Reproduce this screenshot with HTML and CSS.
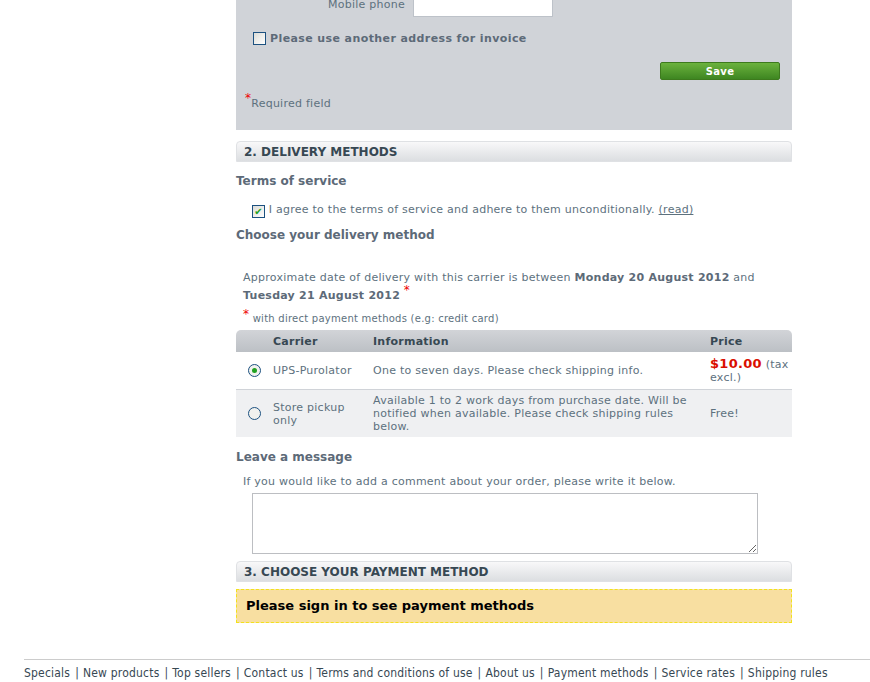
FILE: index.html
```html
<!DOCTYPE html>
<html lang="en">
<head>
  <meta charset="UTF-8">
  <title>Order</title>
  <link rel="stylesheet" href="styles.css">
</head>
<body>
  <div class="column">
    <div class="address-box">
      <div class="field-row">
        <label>Mobile phone</label>
        <input type="text" class="text-input">
      </div>
      <div class="invoice-row">
        <span class="box"></span>
        <span>Please use another address for invoice</span>
      </div>
      <div class="save-row">
        <button class="save-btn">Save</button>
      </div>
      <p class="required"><sup>*</sup>Required field</p>
    </div>

    <h2 class="step-title">2. Delivery methods</h2>
    <h3 class="sub-title">Terms of service</h3>
    <p class="terms">
      <span class="box checked">&#10004;</span>
      I agree to the terms of service and adhere to them unconditionally. <a href="#">(read)</a>
    </p>
    <h3 class="sub-title choose-title">Choose your delivery method</h3>

    <p class="delivery-date">Approximate date of delivery with this carrier is between <b>Monday 20 August 2012</b> and <b>Tuesday 21 August 2012</b> <sup>*</sup></p>
    <p class="note"><sup>*</sup> with direct payment methods (e.g: credit card)</p>

    <table class="carriers">
      <thead>
        <tr>
          <th class="c-radio"></th>
          <th class="c-name">Carrier</th>
          <th class="c-info">Information</th>
          <th class="c-price">Price</th>
        </tr>
      </thead>
      <tbody>
        <tr>
          <td class="c-radio"><span class="radio on"></span></td>
          <td class="name">UPS-Purolator</td>
          <td class="info">One to seven days. Please check shipping info.</td>
          <td><span class="price">$10.00</span> (tax excl.)</td>
        </tr>
        <tr class="alt">
          <td class="c-radio"><span class="radio"></span></td>
          <td class="name">Store pickup only</td>
          <td class="info">Available 1 to 2 work days from purchase date. Will be notified when available. Please check shipping rules below.</td>
          <td>Free!</td>
        </tr>
      </tbody>
    </table>

    <h3 class="sub-title msg-title">Leave a message</h3>
    <p class="msg-hint">If you would like to add a comment about your order, please write it below.</p>
    <textarea class="message"></textarea>

    <h2 class="step-title pay-title">3. Choose your payment method</h2>
    <p class="warning">Please sign in to see payment methods</p>
  </div>

  <div class="footer">
    <a href="#">Specials</a>|<a href="#">New products</a>|<a href="#">Top sellers</a>|<a href="#">Contact us</a>|<a href="#">Terms and conditions of use</a>|<a href="#">About us</a>|<a href="#">Payment methods</a>|<a href="#">Service rates</a>|<a href="#">Shipping rules</a>
  </div>
</body>
</html>
```

FILE: styles.css
```css
* {
  margin: 0;
  padding: 0;
  box-sizing: border-box;
}

body {
  background: #fff;
  color: #5d717e;
  font-family: "DejaVu Sans", Verdana, sans-serif;
  font-size: 11px;
  letter-spacing: 0.25px;
}

.column {
  width: 556px;
  margin-left: 236px;
}

/* address form */
.address-box {
  background: #d0d3d8;
  height: 130px;
  padding: 0 12px 0 9px;
}

.field-row {
  display: flex;
  align-items: flex-start;
  height: 17px;
}

.field-row label {
  width: 168px;
  text-align: right;
  padding-right: 8px;
  line-height: 10px;
  font-size: 11px;
}

.text-input {
  width: 140px;
  height: 17px;
  border: 1px solid #bdc2c9;
  border-top: none;
  background: #fff;
}

.invoice-row {
  display: flex;
  align-items: center;
  gap: 4px;
  margin-top: 15px;
  margin-left: 8px;
  font-weight: bold;
  font-size: 11px;
  letter-spacing: 0.4px;
  color: #5d6a78;
}

.box {
  display: inline-block;
  width: 13px;
  height: 13px;
  border: 1px solid #1c5180;
  background: linear-gradient(135deg, #dcdcd7, #fff);
  font-size: 10px;
  line-height: 11px;
  text-align: center;
  color: #21a121;
  vertical-align: -2px;
  letter-spacing: 0;
}

.save-row {
  display: flex;
  justify-content: flex-end;
  margin-top: 17px;
}

.save-btn {
  width: 120px;
  height: 18px;
  border: 1px solid #3d7a1d;
  border-radius: 2px;
  background: linear-gradient(#6bb23d, #3e8621);
  color: #fff;
  font-family: "DejaVu Sans", Verdana, sans-serif;
  font-weight: bold;
  font-size: 10px;
  letter-spacing: 0.3px;
}

.required {
  margin-top: 17px;
  color: #5d717e;
}

sup {
  color: #e00;
  font-size: 12px;
  line-height: 0;
}

/* steps */
.step-title {
  margin-top: 11px;
  height: 21px;
  padding-left: 7px;
  line-height: 20px;
  font-size: 12px;
  letter-spacing: 0;
  text-transform: uppercase;
  color: #374853;
  background: linear-gradient(#f8f8f9, #dcdee1);
  border: 1px solid #dfe1e4;
  border-radius: 4px 4px 0 0;
}

.sub-title {
  margin-top: 12px;
  font-size: 12px;
  letter-spacing: 0;
  color: #5d6a78;
  line-height: 15px;
}

.terms {
  margin: 13px 0 0 16px;
  line-height: 15px;
}

.terms a {
  color: #5d717e;
}

.choose-title {
  margin-top: 10px;
}

.delivery-date {
  margin: 26px 0 0 7px;
  line-height: 18px;
}

.delivery-date b {
  color: #5d6a78;
}

.note {
  margin: 8px 0 0 7px;
  font-size: 10px;
}

/* carrier table */
.carriers {
  margin-top: 6px;
  width: 100%;
  border-collapse: collapse;
}

.carriers th {
  height: 22px;
  text-align: left;
  color: #374853;
  background: linear-gradient(#d2d4d8, #bcc0c5);
  font-size: 11px;
}

.carriers th:first-child {
  border-radius: 5px 0 0 0;
}

.carriers th:last-child {
  border-radius: 0 5px 0 0;
}

.carriers td {
  vertical-align: middle;
  padding-top: 5px;
  padding-bottom: 5px;
  line-height: 13px;
}

.carriers tbody tr {
  border-bottom: 1px solid #d0d3d8;
}

.carriers tr.alt {
  background: #eff0f2;
  border-bottom: none;
}

.carriers tr.alt td {
  padding-top: 4px;
  padding-bottom: 4px;
}

.c-radio {
  width: 37px;
  text-align: center;
}

.c-name {
  width: 100px;
}

.carriers td.name {
  padding-right: 6px;
}

.carriers td.info {
  padding-right: 16px;
}

.c-price {
  width: 82px;
}

.price {
  color: #da0f00;
  font-weight: bold;
  font-size: 13px;
  letter-spacing: 0.3px;
}

.radio {
  display: inline-block;
  width: 13px;
  height: 13px;
  border: 1px solid #1c5180;
  border-radius: 50%;
  background: #f1f1ee;
  position: relative;
  top: 1px;
}

.radio.on::after {
  content: "";
  position: absolute;
  left: 3px;
  top: 3px;
  width: 5px;
  height: 5px;
  border-radius: 50%;
  background: #21a121;
}

/* message */
.msg-title {
  margin-top: 13px;
}

.msg-hint {
  margin: 10px 0 0 7px;
}

.message {
  display: block;
  margin: 5px 0 0 16px;
  width: 506px;
  height: 61px;
  border: 1px solid #bcbec2;
  resize: vertical;
}

.pay-title {
  margin-top: 7px;
}

.warning {
  margin-top: 7px;
  height: 34px;
  padding-left: 9px;
  line-height: 32px;
  font-size: 13px;
  font-weight: bold;
  letter-spacing: 0;
  color: #000;
  background: #f8dfa1;
  border: 1px dashed #f2e21b;
}

/* footer */
.footer {
  margin: 36px 0 0 24px;
  border-top: 1px solid #ccc;
  padding-top: 6px;
  font-family: "DejaVu Sans Condensed", Tahoma, sans-serif;
  font-size: 12px;
  letter-spacing: 0.2px;
  color: #374853;
}

.footer a {
  color: #374853;
  text-decoration: none;
  margin: 0 5px 0 4px;
}

.footer a:first-child {
  margin-left: 0;
}
```
